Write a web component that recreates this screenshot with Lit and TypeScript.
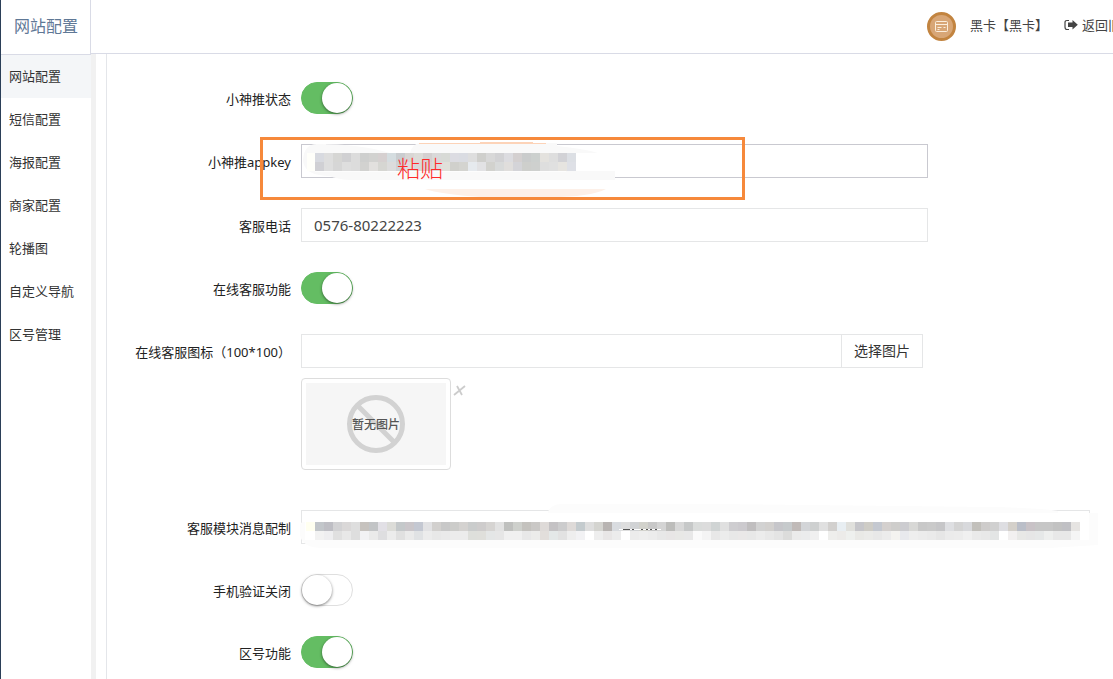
import { LitElement, html, svg, css } from "lit";
import { customElement, property } from "lit/decorators.js";

const CELL = 9;

/* Two-row blocks of colour that hide a sensitive value. */
const KEY_TOP =
  "d8dae0 dedede d6d6d4 d0d0d2 dcdcdc cecfce d2d2d0 d6d0d0 d5dde0 cacdd0 d8d6d4 dcdcd8 d4d0d0 d9d9d9 d8dad6 dcdce2 dadce2 dedede cfcfcc d8d8d8 d2d2d4 dcdce0 d4d0d0 cacccc ccd0ce e4e2de dedede d2d2d6 dcdfe4";
const KEY_BOTTOM =
  "d0d0d4 dedede d6d6d6 dedede dcdcdc d2d2d0 e2e0de d6d6d2 dcdcdc d0d0d4 dedede d8d8d8 d8d4d4 dadada e0e0da d0d0cc d4d4d0 e6eaee e2e2e4 d2d2ce d8dada e0dedc d4d4d8 cecfcc ced0ce dedede e0e0e0 e6e4e0 dee0e6";
const MSG_TOP =
  "c2c6ca bebec4 d2d2d4 dad8d8 dedede c6c2be c2c4c6 e2e0e6 dcdcd8 c4c8ca cac6ca c4c8d2 e2e2e4 d2d0ce c8c8c8 ccccca d4d2d0 cacccc cecccc d6d4d2 e2e2e2 bfc0be ced0cc c4c2be cac8c6 dedad8 c4c2c4 cccccd dedad8 c4cbce dedede d4d4d0 b8b4b2 d9dce0 dedede d1d3d5 d2d2cc c8c8c8 d4d4d4 bdbdbb d8d8d8 c6c8c8 dadcdb dcdcdc d0d4d4 e0e0e0 cecdd0 cccace c0bebf d2d2d2 d2d0ce c6c6ca c6cacc c0bab8 d3d5d8 ced0d0 e0e0e0 d2d0ce e8eef2 e0e0dc c6c6ca ceccc6 c4c8d0 d4d0ce cecdcb ccccd0 d8d8d6 c8c8c8 cacaca c6c6c8 dedfe2 d4d4d4 d8d9dc c2c0bb cecccb d0d0d0 dedee2 d4d0ca babec8 c8c2c6 c6c6c6 c6c6c6 c2c2c2 c0c0c4 e6e4e2";
const MSG_BOTTOM =
  "f2f2f2 eeeef0 e0e0e0 e8e8e8 dedede f2f2f4 eaeaea dedee0 ececec e0e0e0 eaeaea e0e2e4 ececec e8e8e8 eaeaea ececec ececec dedfdb dfdfdb e4e6e6 e6e6e6 f0f0f0 f0f0f0 e8e8e8 ececea e2dedb e4e8e8 e2e2e2 eeeeee f2f2f4 ffffff eeeeee e8e6e6 ececec ffffff ececec eeeeee ececec e8e8e8 e8e6e6 e8e8e6 e8e8e8 fafafa f4f4f4 e8e8e8 ececec e8e8e8 eae8e8 e8e8e8 ececec e8e8e8 e4e4e4 dcdcdb ebebeb ebeced f0f0f0 ffffff eeeeec ecebe9 eef0ee e9e9e6 ebebe9 e8e8e8 ececec f4f3f0 e8e9ed eeeeee ececec eaeaea e6e6e6 ebebeb ececec f0f0f0 eaeaea e8e8e8 e3e5e5 ffffff f2f0f0 e8e8e6 e6e6e6 e6e8e8 eeefee e8e8e8 e8e8e8 f5f5f5";

const mosaic = (x: number, y: number, rows: string[]) =>
  rows.map((row, r) =>
    row.split(" ").map(
      (c, i) => svg`<rect x=${x + i * CELL} y=${y + r * CELL} width=${CELL} height=${CELL} fill=${"#" + c}></rect>`
    )
  );

@customElement("toggle-row")
class ToggleRow extends LitElement {
  @property() label = "";
  @property({ type: Boolean }) on = false;

  static styles = css`
    :host {
      display: grid;
      grid-template-columns: 184px minmax(0, 1fr);
      column-gap: 10px;
    }
    .label {
      padding-top: 7px;
      line-height: 20px;
      text-align: right;
      white-space: nowrap;
    }
    .switch {
      appearance: none;
      position: relative;
      box-sizing: border-box;
      width: 52px;
      height: 32px;
      margin: 0;
      border: 1px solid #dfdfdf;
      border-radius: 16px;
      background: #fff;
      cursor: pointer;
    }
    .switch::before {
      content: "";
      position: absolute;
      top: 0;
      left: 0;
      width: 30px;
      height: 30px;
      border-radius: 50%;
      background: #fff;
      box-shadow: 0 1px 3px rgba(0, 0, 0, 0.5);
    }
    .switch:checked {
      border-color: #64bd63;
      background: #64bd63;
    }
    .switch:checked::before {
      left: 20px;
    }
  `;

  render() {
    return html`
      <label class="label" for="toggle">${this.label}</label>
      <input id="toggle" class="switch" type="checkbox" .checked=${this.on} />
    `;
  }
}

@customElement("app-root")
class AppRoot extends LitElement {
  static styles = css`
    :host {
      display: block;
      font-family: "Noto Sans", "Noto Sans CJK SC", sans-serif;
      font-size: 13px;
      line-height: 20px;
      color: #222;
      background: #fff;
    }
    .shell {
      box-sizing: border-box;
      min-height: 100vh;
      border-left: 1px solid #2b3f58;
      display: flex;
      flex-direction: column;
      overflow: hidden;
    }
    .header {
      display: flex;
      align-items: stretch;
      height: 54px;
    }
    .brand {
      box-sizing: border-box;
      width: 90px;
      height: 55px;
      margin: 0;
      padding-left: 13px;
      border-right: 1px solid #d9dbe6;
      border-bottom: 1px solid #d9dbe6;
      font-size: 16px;
      font-weight: 400;
      line-height: 52px;
      color: #5f7896;
      white-space: nowrap;
    }
    .account {
      flex: 1;
      display: flex;
      align-items: center;
      justify-content: flex-end;
      margin-right: -21px;
      border-bottom: 1px solid #d9dbe6;
      color: #444;
      white-space: nowrap;
    }
    .avatar {
      width: 29px;
      height: 29px;
      margin-right: 14px;
    }
    .name {
      margin-right: 16px;
      padding-bottom: 4px;
    }
    .back {
      display: flex;
      align-items: center;
      gap: 4px;
      padding-bottom: 4px;
      color: #444;
      text-decoration: none;
    }
    .body {
      flex: 1;
      display: flex;
    }
    .menu {
      flex: none;
      width: 90px;
      padding-top: 1px;
      border-right: 5px solid #f1f1f1;
    }
    .item {
      display: block;
      padding-left: 8px;
      line-height: 43px;
      color: #333;
      text-decoration: none;
      white-space: nowrap;
    }
    .item.active {
      margin-left: -1px;
      border-left: 1px solid #fff;
      background: #f4f6f8;
    }
    .form {
      flex: 1;
      min-width: 0;
      box-sizing: border-box;
      margin-left: 10px;
      padding: 28px 23px 10px 0;
      border-left: 1px solid #e4e6ea;
      display: flex;
      flex-direction: column;
      gap: 30px;
    }
    .row {
      display: grid;
      grid-template-columns: 184px minmax(0, 1fr);
      column-gap: 10px;
    }
    .label {
      padding-top: 8px;
      text-align: right;
      white-space: nowrap;
    }
    .control {
      position: relative;
    }
    .medium {
      margin-right: 162px;
    }
    .group {
      display: flex;
      margin-right: 167px;
    }
    .text {
      box-sizing: border-box;
      display: block;
      width: 100%;
      height: 34px;
      margin: 0;
      padding: 0 12px;
      border: 1px solid #e5e6e7;
      border-radius: 0;
      outline: none;
      background: #fff;
      font: inherit;
      font-size: 15px;
      color: #444;
    }
    .text.focus {
      border-color: #c9c9d0;
    }
    .pick {
      flex: none;
      box-sizing: border-box;
      width: 82px;
      margin: 0;
      margin-left: -1px;
      padding: 0;
      border: 1px solid #e5e6e7;
      background: #fff;
      font: inherit;
      font-size: 14px;
      color: #333;
    }
    .preview {
      display: flex;
      align-items: flex-start;
      margin: 10px 0;
    }
    .thumb {
      display: block;
      padding: 4px;
      border: 1px solid #ddd;
      border-radius: 4px;
    }
    .remove {
      margin: 0;
      margin-left: 2px;
      padding: 0;
      border: 0;
      background: none;
      line-height: 0;
    }
    .cover {
      position: absolute;
      pointer-events: none;
    }
    .key-cover {
      left: -41px;
      top: -7px;
    }
    .msg-cover {
      left: -1px;
      top: -10px;
    }
    .none {
      font-size: 12px;
      font-weight: 500;
      fill: #555;
    }
    .note {
      font-family: "Noto Sans CJK SC", sans-serif;
      font-size: 23px;
      font-weight: 300;
      fill: #ff2a2a;
    }
  `;

  private menu = ["网站配置", "短信配置", "海报配置", "商家配置", "轮播图", "自定义导航", "区号管理"];

  render() {
    return html`
      <div class="shell">
        <header class="header">
          <h1 class="brand">网站配置</h1>
          <div class="account">
            <svg class="avatar" viewBox="0 0 29 29" aria-hidden="true">
              <circle cx="14.5" cy="14.5" r="13" fill="#d8a676" stroke="#c28440" stroke-width="3"></circle>
              <g fill="none" stroke="#fbeedd">
                <rect x="8.5" y="9.5" width="12" height="10" rx="1"></rect>
                <path d="M8 12.5H21M10.5 15.5h4M16.5 15.5h2M10.5 17.5h2"></path>
              </g>
            </svg>
            <span class="name">黑卡【黑卡】</span>
            <a class="back" href="#">
              <svg width="14" height="12" viewBox="0 0 14 12" aria-hidden="true">
                <path d="M5 1.5H3Q1 1.5 1 3.500V8Q1 10.500 3 10.500H5" fill="none" stroke="#444" stroke-width="1.200"></path>
                <path d="M4 3.500h4.500V1L13.800 5.700 8.500 10.500V8H4z" fill="#444"></path>
              </svg>
              <span>返回旧版</span>
            </a>
          </div>
        </header>
        <div class="body">
          <nav class="menu">
            ${this.menu.map((m, i) => html`<a class="item ${i === 0 ? "active" : ""}" href="#">${m}</a>`)}
          </nav>
          <form class="form">
            <toggle-row label="小神推状态" on></toggle-row>
            <div class="row">
              <label class="label" for="appkey">小神推appkey</label>
              <div class="control medium">
                <input id="appkey" class="text focus" type="text" />
                ${this.keyCover()}
              </div>
            </div>
            <div class="row">
              <label class="label" for="phone">客服电话</label>
              <div class="control medium">
                <input id="phone" class="text" type="text" value="0576-80222223" />
              </div>
            </div>
            <toggle-row label="在线客服功能" on></toggle-row>
            <div class="row">
              <label class="label" for="icon">在线客服图标（100*100）</label>
              <div class="control">
                <div class="group">
                  <input id="icon" class="text" type="text" />
                  <button class="pick" type="button">选择图片</button>
                </div>
                <div class="preview">
                  <svg class="thumb" width="140" height="82" viewBox="0 0 140 82">
                    <rect width="140" height="82" fill="#f6f6f6"></rect>
                    <g fill="none" stroke="#d2d2d2" stroke-width="5">
                      <circle cx="70" cy="41" r="26.500"></circle>
                      <path d="M51 22L89 60"></path>
                    </g>
                    <text class="none" x="70" y="46" text-anchor="middle">暂无图片</text>
                  </svg>
                  <button class="remove" type="button" aria-label="×">
                    <svg width="13" height="24" viewBox="0 0 13 24">
                      <path d="M1 17L12 8M4 8L9 17" fill="none" stroke="#ccc" stroke-width="1.800"></path>
                    </svg>
                  </button>
                </div>
              </div>
            </div>
            <div class="row">
              <label class="label" for="message">客服模块消息配制</label>
              <div class="control">
                <input id="message" class="text" type="text" />
                ${this.messageCover()}
              </div>
            </div>
            <toggle-row label="手机验证关闭"></toggle-row>
            <toggle-row label="区号功能" on></toggle-row>
          </form>
        </div>
      </div>
    `;
  }

  private keyCover() {
    return html`<svg class="cover key-cover" width="485" height="63" viewBox="260 137 485 63">
      <path d="M316 143h10v3h-10zM336 176h279v4H350q-8 0-14-3z" fill="#fff"></path>
      <path d="M303 160Q304 144 317 144Q360 144 390 153H410Q412 144 420 143H557V146Q585 149 598 153H566V171H615V180H350Q336 179 330 176Q304 176 303 160z" fill="#f9f9f9"></path>
      <rect x="307" y="153" width="8" height="18" fill="#fffffa"></rect>
      <rect x="315" y="171" width="251" height="1" fill="#fdfdfd"></rect>
      <path d="M419 143h61v-1h53v1h13v1H419z" fill="#fcd3b8"></path>
      <path d="M425 189H606Q590 197 550 197H480Q440 194 425 189z" fill="#fdf0e8"></path>
      ${mosaic(315, 153, [KEY_TOP, KEY_BOTTOM])}
      <text class="note" x="397" y="177">粘贴</text>
      <rect x="261.500" y="138.500" width="482" height="60" fill="none" stroke="#f6893b" stroke-width="3"></rect>
    </svg>`;
  }

  private messageCover() {
    return html`<svg class="cover msg-cover" width="800" height="50" viewBox="300 500 800 50">
      <path d="M548 512Q550 505 560 504H716L990 507Q1040 508 1058 511V513H548z" fill="#fcfcfc"></path>
      <path d="M300 526Q300 522 304 522H1080V513H1098V545L1050 548H320Q302 547 300 535z" fill="#fcfcfc"></path>
      <rect x="305" y="513" width="784" height="27" fill="#fff"></rect>
      <rect x="306" y="522" width="9" height="9" fill="#fffff0"></rect>
      <path d="M301.500 540V543.500H304" fill="none" stroke="#e5e6e7"></path>
      ${mosaic(315, 522, [MSG_TOP, MSG_BOTTOM])}
      <path d="M619 529.500h42" stroke="#fff"></path>
      <path d="M623 529.500h7M632 529.500h2M641 529.500h2M646 529.500h2M650 529.500h2M655 529.500h2" stroke="#555"></path>
    </svg>`;
  }
}
